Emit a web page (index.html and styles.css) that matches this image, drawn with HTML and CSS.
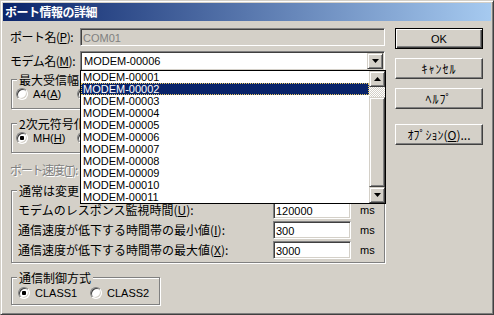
FILE: index.html
```html
<!DOCTYPE html>
<html lang="ja">
<head>
<meta charset="utf-8">
<title>ポート情報の詳細</title>
<link rel="stylesheet" href="styles.css">
</head>
<body>
<div class="window">
  <div class="titlebar">ポート情報の詳細</div>
  <div class="body">
    <div class="left">
      <div class="row r-port">
        <span class="lbl">ポート名(<u>P</u>):</span>
        <div class="edit wide disabled"><span class="lat">COM01</span></div>
      </div>
      <div class="row r-modem">
        <span class="lbl">モデム名(<u>M</u>):</span>
        <div class="combo">
          <span class="val lat">MODEM-00006</span>
          <span class="dropbtn"><svg width="7" height="4" viewBox="0 0 7 4"><path d="M0 0h7l-3.5 4z" fill="#000"/></svg></span>
          <div class="list">
            <ul class="items lat">
              <li>MODEM-00001</li>
              <li class="sel">MODEM-00002</li>
              <li>MODEM-00003</li>
              <li>MODEM-00004</li>
              <li>MODEM-00005</li>
              <li>MODEM-00006</li>
              <li>MODEM-00007</li>
              <li>MODEM-00008</li>
              <li>MODEM-00009</li>
              <li>MODEM-00010</li>
              <li>MODEM-00011</li>
            </ul>
            <div class="scroll">
              <span class="sbtn"><svg width="7" height="4" viewBox="0 0 7 4"><path d="M0 4h7l-3.5-4z" fill="#000"/></svg></span>
              <span class="strack"></span>
              <span class="thumb"></span>
              <span class="sbtn"><svg width="7" height="4" viewBox="0 0 7 4"><path d="M0 0h7l-3.5 4z" fill="#000"/></svg></span>
            </div>
          </div>
        </div>
      </div>

      <fieldset class="grp g1">
        <legend>最大受信幅</legend>
        <div class="radios">
          <label class="radio first"><span class="rb"></span><span class="lat">A4(<u>A</u>)</span></label>
          <span class="radio"><span class="rb"></span></span>
        </div>
      </fieldset>

      <fieldset class="grp g2">
        <legend>2次元符号化</legend>
        <div class="radios">
          <label class="radio first"><span class="rb on"></span><span class="lat">MH(<u>H</u>)</span></label>
          <span class="radio"><span class="rb"></span></span>
        </div>
      </fieldset>

      <div class="speed">ポート速度(<u>T</u>):</div>

      <fieldset class="grp g3">
        <legend>通常は変更し</legend>
        <div class="fields">
          <span class="flbl">モデムのレスポンス監視時間(<u>U</u>):</span>
          <div class="edit num"><span class="lat">120000</span></div>
          <span class="unit lat">ms</span>
          <span class="flbl">通信速度が低下する時間帯の最小値(<u>I</u>):</span>
          <div class="edit num"><span class="lat">300</span></div>
          <span class="unit lat">ms</span>
          <span class="flbl">通信速度が低下する時間帯の最大値(<u>X</u>):</span>
          <div class="edit num"><span class="lat">3000</span></div>
          <span class="unit lat">ms</span>
        </div>
      </fieldset>

      <fieldset class="grp g4">
        <legend>通信制御方式</legend>
        <div class="radios">
          <label class="radio first"><span class="rb on"></span><span class="lat">CLASS1</span></label>
          <label class="radio"><span class="rb"></span><span class="lat">CLASS2</span></label>
        </div>
      </fieldset>
    </div>

    <div class="right">
      <button class="btn default"><span class="lat">OK</span></button>
      <button class="btn kana">ｷｬﾝｾﾙ</button>
      <button class="btn kana">ﾍﾙﾌﾟ</button>
      <button class="btn opt">ｵﾌﾟｼｮﾝ(<u>O</u>)...</button>
    </div>
  </div>
</div>
</body>
</html>
```

FILE: styles.css
```css
* { box-sizing: border-box; }
html, body { margin: 0; padding: 0; background: #d4d0c8; }
body {
  font-family: "Noto Sans CJK JP", "Noto Sans", sans-serif;
  font-size: 12px;
  line-height: 14px;
  color: #000;
}
u { text-decoration: underline; text-underline-offset: 1px; }
.lat { font-family: "Liberation Sans", "Noto Sans CJK JP", sans-serif; font-size: 11px; }

.window {
  width: 494px;
  height: 315px;
  border: 1px solid;
  border-color: #d4d0c8 #404040 #404040 #d4d0c8;
  box-shadow: inset 1px 1px #fff, inset -1px -1px #808080;
  padding: 2px;
  background: #d4d0c8;
  display: flex;
  flex-direction: column;
}
.titlebar {
  flex: none;
  height: 18px;
  background: linear-gradient(to right, #0a246a, #a6caf0);
  color: #fff;
  font-weight: bold;
  font-size: 12px;
  line-height: 18px;
  padding-left: 2px;
  letter-spacing: -0.5px;
}
.body { display: flex; padding: 7px 0 0 7px; }
.left { width: 375px; display: flex; flex-direction: column; }
.right { margin-left: 10px; width: 88px; display: flex; flex-direction: column; }

.row { display: flex; align-items: center; }
.lbl { width: 70px; flex: none; white-space: nowrap; letter-spacing: -0.5px; }

.edit {
  background: #fff;
  border: 1px solid;
  border-color: #808080 #fff #fff #808080;
  box-shadow: inset 1px 1px #404040, inset -1px -1px #d4d0c8;
  padding: 1px 2px;
  height: 18px;
  line-height: 14px;
  white-space: nowrap;
}
.edit.disabled { background: #d4d0c8; color: #808080; }
.edit.wide { width: 306px; }

.r-modem { margin-top: 5px; }
.combo {
  position: relative;
  width: 306px;
  height: 20px;
  background: #fff;
  border: 1px solid;
  border-color: #808080 #fff #fff #808080;
  box-shadow: inset 1px 1px #404040, inset -1px -1px #d4d0c8;
  padding: 1px;
  display: flex;
  align-items: center;
}
.combo .val { flex: 1; padding-left: 2px; }
.dropbtn, .sbtn, .thumb {
  background: #d4d0c8;
  border: 1px solid;
  border-color: #d4d0c8 #404040 #404040 #d4d0c8;
  box-shadow: inset 1px 1px #fff, inset -1px -1px #808080;
}
.dropbtn, .sbtn {
  width: 16px;
  height: 16px;
  flex: none;
  display: flex;
  align-items: center;
  justify-content: center;
}
.dropbtn svg, .sbtn svg { display: block; }

.list {
  position: absolute;
  left: -1px;
  top: 18px;
  width: 306px;
  height: 134px;
  border: 1px solid #000;
  background: #fff;
  display: flex;
  z-index: 5;
}
.items { flex: 1; margin: 0; padding: 0; list-style: none; }
.items li { height: 12px; line-height: 12px; padding-left: 2px; white-space: nowrap; }
.items li.sel {
  background: #0a246a;
  color: #fff;
  outline: 1px dotted #e8c860;
  outline-offset: -1px;
}
.scroll { width: 16px; display: flex; flex-direction: column; }
.strack {
  height: 10px;
  background-color: #fff;
  background-image: conic-gradient(#d4d0c8 25%, #fff 0 50%, #d4d0c8 0 75%, #fff 0);
  background-size: 2px 2px;
}
.thumb { height: 90px; }

.grp {
  margin: 0 0 0 1px;
  padding: 0;
  width: 374px;
  min-width: 0;
  border: 1px solid #808080;
  box-shadow: inset 1px 1px #fff, 1px 1px #fff;
}
.grp legend {
  padding: 0 2px;
  margin-left: 5px;
  height: 13px;
  line-height: 13px;
  background: #d4d0c8;
  white-space: nowrap;
  max-width: 63px;
  overflow: hidden;
}
.g1 legend, .g4 legend { max-width: none; }
.g1 { margin-top: 2px; }
.g2 { margin-top: 8px; }
.g1 .radios, .g2 .radios { padding: 1px 0 7px 4px; }

.radios { display: flex; align-items: center; }
.radio { display: flex; align-items: center; height: 14px; white-space: nowrap; }
.g1 .radio.first, .g2 .radio.first { width: 61px; }
.rb {
  position: relative;
  width: 12px;
  height: 12px;
  flex: none;
  border-radius: 50%;
  background: #fff;
  border: 1px solid;
  border-color: #808080 #fff #fff #808080;
  box-shadow: inset 1px 1px #404040, inset -1px -1px #d4d0c8;
  margin-right: 5px;
}
.rb.on::after {
  content: "";
  position: absolute;
  left: 3px;
  top: 3px;
  width: 4px;
  height: 4px;
  border-radius: 1px;
  background: #000;
}

.speed {
  margin-top: 10px;
  height: 14px;
  color: #808080;
  text-shadow: 1px 1px #fff;
  white-space: nowrap;
  letter-spacing: -1.3px;
}

.g3 { margin-top: 7px; }
.fields {
  display: grid;
  grid-template-columns: 255px 78px auto;
  grid-auto-rows: 18px;
  row-gap: 2px;
  padding: 4px 0 3px 6px;
  align-items: center;
}
.flbl { white-space: nowrap; }
.edit.num { width: 78px; }
.unit { padding-left: 9px; }

.g4 { margin-top: 8px; width: 149px; }
.g4 .radios { padding: 2px 0 4px 6px; }
.g4 .radio.first { width: 72px; }

.btn {
  font: inherit;
  color: #000;
  width: 88px;
  height: 21px;
  padding: 0;
  margin: 0;
  background: #d4d0c8;
  border: 1px solid;
  border-color: #fff #404040 #404040 #fff;
  box-shadow: inset -1px -1px #808080;
  line-height: 17px;
  text-align: center;
  white-space: nowrap;
}
.btn.kana { letter-spacing: 1px; }
.btn.default {
  border: 1px solid #000;
  box-shadow: inset 1px 1px #fff, inset -1px -1px #404040, inset -2px -2px #808080;
}
.btn + .btn { margin-top: 9px; }
.btn.opt { margin-top: 15px; }
```
